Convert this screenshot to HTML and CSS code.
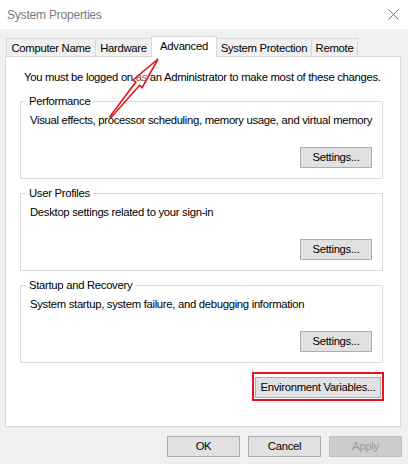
FILE: index.html
```html
<!DOCTYPE html>
<html>
<head>
<meta charset="utf-8">
<link rel="stylesheet" href="styles.css">
</head>
<body>
<div class="window">
  <div class="titlebar">
    <span class="title">System Properties</span>
    <svg class="close" width="11" height="11" viewBox="0 0 11 11"><path d="M0.5 0.5L10.5 10.5M10.5 0.5L0.5 10.5" stroke="#777" stroke-width="1" fill="none"/></svg>
  </div>
  <div class="tabs">
    <div class="tab tab-name">Computer Name</div>
    <div class="tab tab-hw">Hardware</div>
    <div class="tab tab-adv active">Advanced</div>
    <div class="tab tab-sp">System Protection</div>
    <div class="tab tab-rem">Remote</div>
  </div>
  <div class="panel">
    <p class="note">You must be logged on as an Administrator to make most of these changes.</p>
    <fieldset class="group">
      <legend>Performance</legend>
      <p class="desc">Visual effects, processor scheduling, memory usage, and virtual memory</p>
      <div class="btn-row"><button class="btn btn-settings">Settings...</button></div>
    </fieldset>
    <fieldset class="group">
      <legend>User Profiles</legend>
      <p class="desc">Desktop settings related to your sign-in</p>
      <div class="btn-row"><button class="btn btn-settings">Settings...</button></div>
    </fieldset>
    <fieldset class="group">
      <legend>Startup and Recovery</legend>
      <p class="desc">System startup, system failure, and debugging information</p>
      <div class="btn-row"><button class="btn btn-settings">Settings...</button></div>
    </fieldset>
    <div class="env-row">
      <span class="highlight"><button class="btn btn-env">Environment Variables...</button></span>
    </div>
  </div>
  <div class="actions">
    <button class="btn btn-action">OK</button>
    <button class="btn btn-action">Cancel</button>
    <button class="btn btn-action disabled">Apply</button>
  </div>
  <svg class="arrow" width="408" height="464" viewBox="0 0 408 464">
    <polygon points="158,59 142.3,87.5 139.6,85.3 111.1,117.5 109.9,116.5 135.8,82.1 133.1,79.9" fill="#fff" fill-opacity="0.35" stroke="#e3141c" stroke-width="1.6" stroke-linejoin="miter"/>
  </svg>
</div>
</body>
</html>
```

FILE: styles.css
```css
* { box-sizing: border-box; }
html, body { margin: 0; padding: 0; }
body {
  width: 408px;
  height: 464px;
  background: #f0f0f0;
  font-family: "Liberation Sans", Arial, sans-serif;
  font-size: 11.3px;
  letter-spacing: -0.3px;
  color: #000;
  overflow: hidden;
}
.window {
  position: relative;
  width: 408px;
  height: 464px;
  display: flex;
  flex-direction: column;
}
.titlebar {
  height: 29px;
  background: #fff;
  display: flex;
  align-items: center;
  justify-content: space-between;
  padding: 0 9px 0 7px;
}
.title {
  font-size: 12px;
  color: #7a7a7a;
  letter-spacing: -0.2px;
}
.close { display: block; margin-top: -1px; }

.tabs {
  display: flex;
  align-items: flex-end;
  padding-left: 6px;
  margin-top: 7px;
  height: 20px;
}
.tab {
  height: 18px;
  border: 1px solid #d9d9d9;
  border-bottom: none;
  background: #f0f0f0;
  display: flex;
  align-items: center;
  justify-content: center;
  line-height: 14px;
  padding-top: 1px;
  margin-left: -1px;
  white-space: nowrap;
}
.tab:first-child { margin-left: 0; }
.tab-name { width: 90px; }
.tab-hw { width: 57px; }
.tab-adv { width: 66px; }
.tab-sp { width: 96px; }
.tab-rem { width: 47px; }
.tab.active {
  height: 21px;
  background: #fff;
  margin-bottom: -1px;
  position: relative;
  z-index: 1;
  padding-top: 0;
  padding-bottom: 3px;
}

.panel {
  margin-left: 5px;
  width: 396px;
  height: 371px;
  background: #fff;
  border: 1px solid #d9d9d9;
  display: flex;
  flex-direction: column;
  padding: 0 0 0 14px;
}
.note {
  margin: 13px 0 0 4px;
  line-height: 14px;
  white-space: nowrap;
}
.group {
  width: 363px;
  margin: 10px 0 0 0;
  padding: 0 10px 10px 9px;
  border: 1px solid #dcdcdc;
  min-width: 0;
}
.group + .group { margin-top: 7px; }
.group legend {
  padding: 0 3px;
  margin-left: -4px;
  line-height: 14px;
}
.desc {
  margin: 5px 0 0 0;
  line-height: 14px;
  white-space: nowrap;
}
.btn-row {
  display: flex;
  justify-content: flex-end;
  margin-top: 20px;
}
.btn {
  font-family: inherit;
  font-size: 11.3px;
  letter-spacing: -0.3px;
  color: #000;
  background: #e1e1e1;
  border: 1px solid #adadad;
  border-radius: 0;
  height: 21px;
  padding: 0;
  margin: 0;
  line-height: 19px;
}
.btn-settings { width: 72px; }
.env-row {
  display: flex;
  justify-content: flex-end;
  margin-top: 9px;
  padding-right: 16px;
}
.highlight {
  display: flex;
  border: 2px solid #e3141c;
  padding: 3px 1px 1px 1px;
}
.btn-env { width: 126px; }

.actions {
  display: flex;
  justify-content: flex-end;
  gap: 8px;
  margin-top: 9px;
  padding-right: 6px;
}
.btn-action { width: 73px; }
.btn.disabled {
  background: #cccccc;
  border-color: #bfbfbf;
  color: #9a9a9a;
}
.arrow {
  position: absolute;
  left: 0;
  top: 0;
  pointer-events: none;
}
```
